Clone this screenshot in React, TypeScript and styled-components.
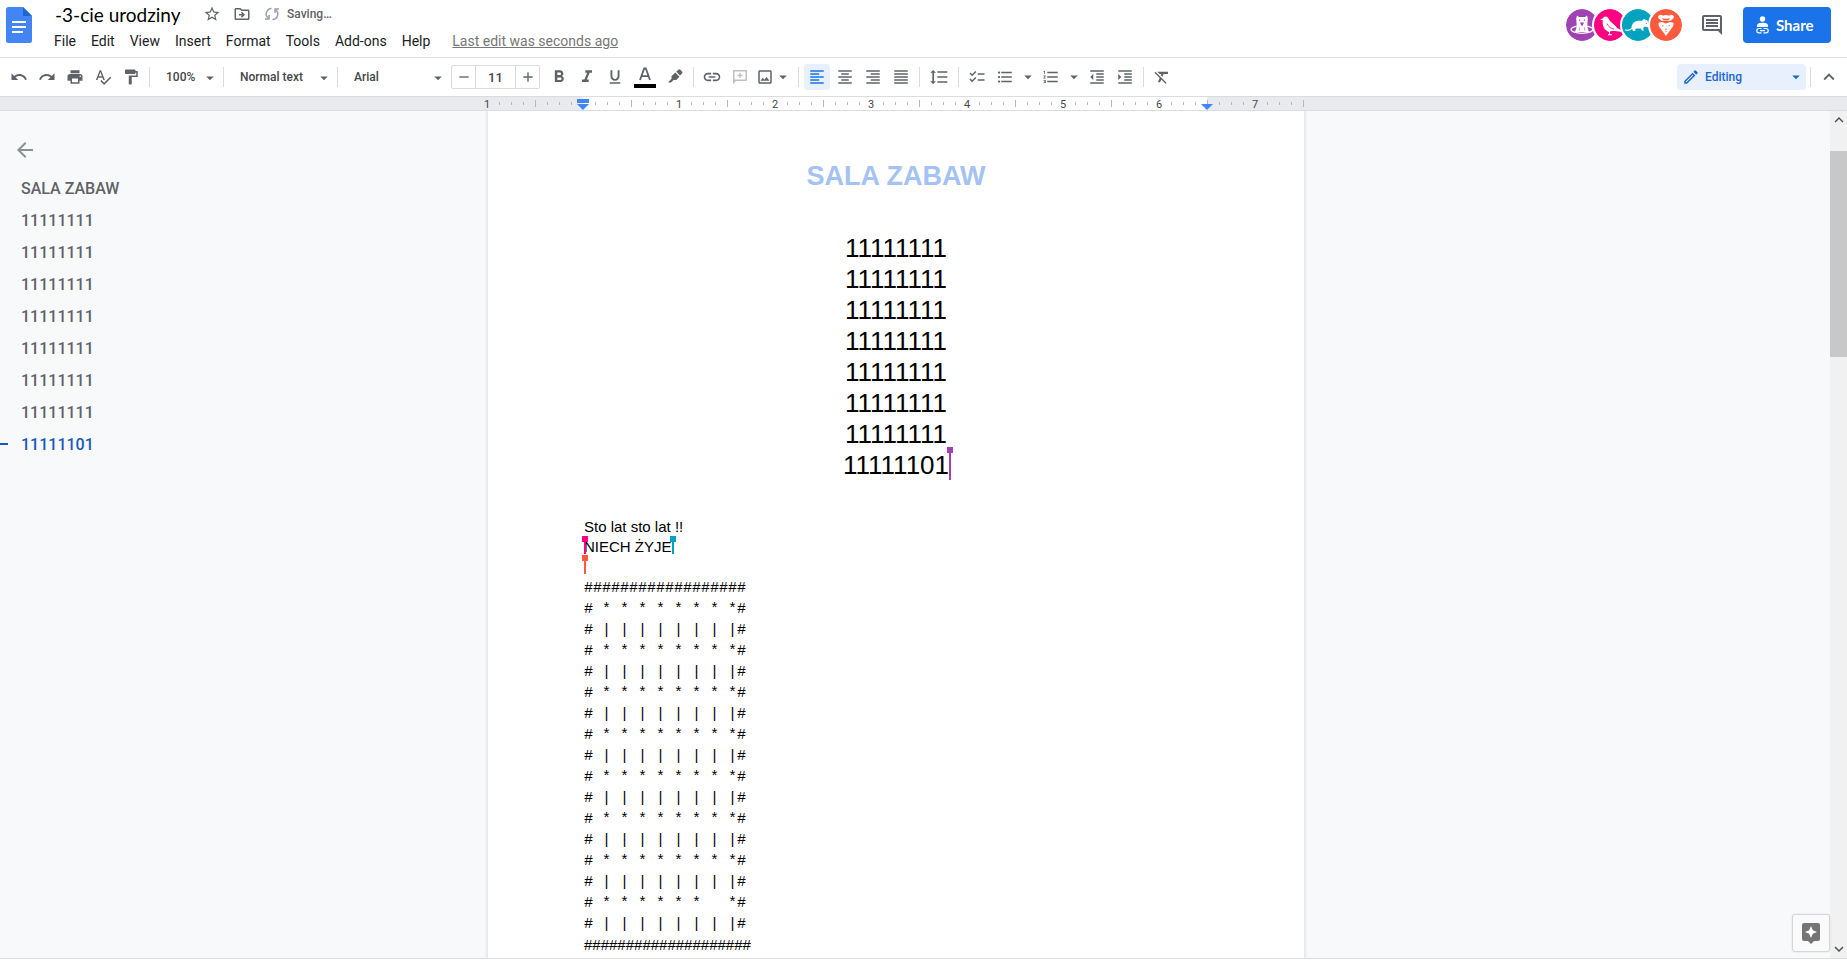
import React from "react";
import styled, { createGlobalStyle } from "styled-components";
import {
  MdStarBorder,
  MdOutlineDriveFileMove,
  MdUndo,
  MdRedo,
  MdPrint,
  MdSpellcheck,
  MdFormatPaint,
  MdAdd,
  MdRemove,
  MdFormatBold,
  MdFormatItalic,
  MdFormatUnderlined,
  MdLink,
  MdOutlineImage,
  MdFormatAlignLeft,
  MdFormatAlignCenter,
  MdFormatAlignRight,
  MdFormatAlignJustify,
  MdFormatLineSpacing,
  MdChecklist,
  MdFormatListBulleted,
  MdFormatListNumbered,
  MdFormatIndentDecrease,
  MdFormatIndentIncrease,
  MdFormatClear,
  MdKeyboardArrowUp,
  MdKeyboardArrowDown,
  MdArrowDropDown,
  MdArrowBack,
  MdOutlineEdit,
} from "react-icons/md";

const GlobalStyle = createGlobalStyle`
  *, *::before, *::after { box-sizing: border-box; }
  body { margin: 0; background: #fff; font-family: Roboto, "Liberation Sans", sans-serif; color: #202124; }
  button, input, select { font: inherit; color: inherit; }
  button { border: 0; padding: 0; background: none; cursor: pointer; }
  h1, h2, p, ul { margin: 0; padding: 0; }
  svg { display: block; flex: none; }
`;

const Shell = styled.div`
  display: flex;
  flex-direction: column;
  height: 100vh;
  overflow: hidden;
  padding-bottom: 4px;
`;

/* ---------- header ---------- */

const Header = styled.header`
  display: flex;
  flex: none;
  height: 58px;
  border-bottom: 1px solid #dadce0;
  padding: 7px 16px 0 6px;
`;

const HomeLink = styled.a`
  display: block;
  height: 36px;
`;

const TitleBlock = styled.div`
  flex: 1;
  margin-left: 15px;
  min-width: 0;
`;

const TitleRow = styled.div`
  display: flex;
  align-items: center;
  height: 14px;
  padding-left: 8px;
  color: #5f6368;
`;

const TitleInput = styled.input`
  width: 147px;
  height: 24px;
  border: 0;
  padding: 0;
  background: none;
  font-family: Lato, Roboto, sans-serif;
  font-size: 19px;
  color: #000;
  outline: none;
`;

const TitleButton = styled.button`
  display: flex;
  align-items: center;
  justify-content: center;
  width: 20px;
  height: 20px;
  margin-right: 10px;
`;

const SaveState = styled.span`
  display: flex;
  align-items: center;
  gap: 7px;
  margin-left: 2px;
  font-size: 12px;
  font-weight: 500;
`;

const MenuBar = styled.nav`
  display: flex;
  align-items: center;
  gap: 1px;
  height: 22px;
  margin-top: 9px;
`;

const MenuButton = styled.button`
  padding: 0 7px;
  height: 22px;
  font-size: 14px;
  line-height: 22px;
`;

const LastEdit = styled.a`
  margin-left: 14px;
  font-size: 14px;
  line-height: 20px;
  color: #777;
  text-decoration: underline;
`;

const HeaderRight = styled.div`
  display: flex;
  align-items: center;
  height: 36px;
`;

const Avatars = styled.div`
  display: flex;
  margin-right: 18px;
`;

const Avatar = styled.span<{ $color: string }>`
  display: block;
  width: 36px;
  height: 36px;
  border: 2px solid #fff;
  border-radius: 50%;
  background: ${(p) => p.$color};
  background-clip: padding-box;
  & + & {
    margin-left: -8px;
  }
`;

const CommentButton = styled.button`
  margin-right: 21px;
  color: #5f6368;
`;

const ShareButton = styled.button`
  display: flex;
  align-items: center;
  gap: 7px;
  width: 88px;
  height: 36px;
  padding-left: 13px;
  border-radius: 4px;
  background: #1a73e8;
  color: #fff;
  font-family: Lato, Roboto, sans-serif;
  font-size: 15px;
  font-weight: 700;
`;

/* ---------- toolbar ---------- */

const Toolbar = styled.div`
  display: flex;
  flex: none;
  align-items: center;
  height: 39px;
  border-bottom: 1px solid #dadce0;
  padding: 0 4px 0 5px;
  color: #5f6368;
`;

const ToolButton = styled.button<{ $active?: boolean; $width?: number; $faint?: boolean }>`
  display: flex;
  flex: none;
  align-items: center;
  justify-content: center;
  width: ${(p) => p.$width ?? 26}px;
  height: 26px;
  margin: 0 1px;
  border-radius: 3px;
  opacity: ${(p) => (p.$faint ? 0.4 : 1)};
  background: ${(p) => (p.$active ? "#e8f0fe" : "none")};
  color: ${(p) => (p.$active ? "#1a73e8" : "inherit")};
`;

const Divider = styled.span`
  flex: none;
  width: 1px;
  height: 20px;
  margin: 0 4px;
  background: #dadce0;
`;

const SelectBox = styled.label<{ $width: number }>`
  position: relative;
  display: block;
  flex: none;
  width: ${(p) => p.$width}px;
  height: 26px;
  & > svg {
    position: absolute;
    right: 0;
    top: 5px;
    pointer-events: none;
  }
`;

const Select = styled.select`
  appearance: none;
  width: 100%;
  height: 26px;
  border: 0;
  padding: 0 0 0 12px;
  background: none;
  font-size: 12px;
  font-weight: 500;
  color: #444746;
  outline: none;
`;

const SizeBox = styled.div`
  display: flex;
  flex: none;
  height: 24px;
  margin: 0 5px 0 4px;
  border: 1px solid #dadce0;
  border-radius: 2px;
`;

const SizeButton = styled.button`
  display: flex;
  align-items: center;
  justify-content: center;
  width: 23px;
`;

const SizeInput = styled.input`
  width: 41px;
  border: 0;
  border-left: 1px solid #dadce0;
  border-right: 1px solid #dadce0;
  padding: 0;
  text-align: center;
  font-size: 13px;
  font-weight: 500;
  color: #444746;
  outline: none;
`;

const Spacer = styled.span`
  flex: 1;
`;

const ModeBox = styled.label`
  position: relative;
  display: block;
  flex: none;
  width: 129px;
  height: 26px;
  border-radius: 4px;
  background: #e8f0fe;
  color: #1967d2;
  & > svg {
    position: absolute;
    top: 4px;
    pointer-events: none;
  }
  & > svg:first-child {
    left: 5px;
  }
  & > svg:last-child {
    right: 1px;
  }
`;

const ModeSelect = styled(Select)`
  padding-left: 28px;
  color: #1967d2;
`;

/* ---------- ruler ---------- */

const Ruler = styled.div`
  display: grid;
  flex: none;
  grid-template-columns: minmax(0, 1fr) 816px minmax(0, 1fr) 55px;
  height: 14px;
  border-bottom: 1px solid #dadce0;
  background: #e8eaed;
`;

const RulerScale = styled.div`
  position: relative;
  display: flex;
  grid-column: 2;
  align-items: center;
  height: 13px;
  margin: 0 -5px 0 -7px;
  background: linear-gradient(#fff, #fff) 102px 0 / 624px 13px no-repeat;
`;

const RulerCell = styled.span`
  display: flex;
  flex: none;
  justify-content: center;
  width: 12px;
`;

const RulerNumber = styled(RulerCell)`
  padding-top: 2px;
  font-size: 11px;
  line-height: 13px;
  color: #444746;
`;

const Tick = styled.i<{ $major?: boolean }>`
  width: 1px;
  height: ${(p) => (p.$major ? 7 : 3)}px;
  background: #b4b7bb;
`;

const Indent = styled.svg<{ $left: number }>`
  position: absolute;
  top: 2px;
  left: ${(p) => p.$left}px;
`;

/* ---------- editor ---------- */

const Editor = styled.main`
  position: relative;
  display: grid;
  flex: 1;
  grid-template-columns: minmax(0, 1fr) 816px minmax(0, 1fr) 38px 17px;
  min-height: 0;
  overflow: hidden;
  border-bottom: 1px solid #dadce0;
  background: #f8f9fb;
`;

const Outline = styled.nav`
  padding: 27px 0 0;
  color: #5f6368;
`;

const BackButton = styled.button`
  display: block;
  margin: 0 0 10px 13px;
  opacity: 0.7;
`;

const OutlineList = styled.ul`
  list-style: none;
`;

const OutlineLink = styled.a<{ $current?: boolean }>`
  display: flex;
  align-items: center;
  height: 32px;
  font-size: 16px;
  font-weight: 500;
  text-decoration: none;
  color: ${(p) => (p.$current ? "#185abc" : "#5f6368")};
  &::before {
    content: "";
    width: 8px;
    height: 2px;
    margin-right: 13px;
    background: ${(p) => (p.$current ? "#185abc" : "transparent")};
  }
`;

const Page = styled.article`
  grid-column: 2;
  min-height: 0;
  overflow: hidden;
  padding: 50px 96px 0;
  background: #fff;
  box-shadow: 0 0 3px 1px rgba(60, 64, 67, 0.15);
  font-family: "Liberation Sans", Arial, sans-serif;
  color: #000;
`;

const DocTitle = styled.h1`
  margin-bottom: 41px;
  text-align: center;
  font-size: 27px;
  line-height: 31px;
  font-weight: 700;
  color: #a4c2f4;
`;

const DocHeading = styled.h2`
  height: 31px;
  text-align: center;
  font-size: 26px;
  line-height: 31px;
  font-weight: 400;
`;

const Body = styled.div`
  margin-top: 36px;
`;

const Line = styled.p`
  height: 20px;
  font-size: 15px;
  line-height: 20px;
  white-space: pre;
`;

const Cake = styled.div`
  margin-top: 1px;
`;

const MonoLine = styled.p`
  font-family: "Liberation Mono", monospace;
  font-size: 15px;
  line-height: 21px;
  white-space: pre;
`;

const Caret = styled.span<{ $color: string; $height: number; $rise: number }>`
  position: relative;
  display: inline-block;
  width: 0;
  height: 1px;
  vertical-align: top;
  &::before,
  &::after {
    content: "";
    position: absolute;
    top: ${(p) => -p.$rise}px;
    background: ${(p) => p.$color};
  }
  &::before {
    left: 0;
    width: 2px;
    height: ${(p) => p.$height}px;
  }
  &::after {
    left: -2px;
    width: 6px;
    height: 6px;
  }
`;

const Scrollbar = styled.div`
  display: flex;
  grid-column: 5;
  flex-direction: column;
  align-items: center;
  background: #f1f1f1;
  color: #505050;
`;

const ScrollThumb = styled.span`
  width: 17px;
  height: 206px;
  margin-top: 22px;
  margin-bottom: auto;
  background: #c8c8c8;
`;

const ExploreButton = styled.button`
  position: absolute;
  right: 17px;
  bottom: 6px;
  display: flex;
  align-items: center;
  justify-content: center;
  width: 38px;
  height: 38px;
  border: 1px solid #d4d6d9;
  border-radius: 3px;
  background: #fafafa;
  box-shadow: 0 0 2px rgba(0, 0, 0, 0.12);
`;

/* ---------- drawings ---------- */

const DocsLogo = () => (
  <svg width="26" height="36" viewBox="0 0 26 36" aria-hidden="true">
    <path d="M2.500 0H17l9 9v24.500a2.500 2.500 0 0 1-2.500 2.500h-21A2.500 2.500 0 0 1 0 33.500v-31A2.500 2.500 0 0 1 2.500 0z" fill="#4285f4" />
    <path d="M17 0l9 9h-9z" fill="#1967d2" />
    <path d="M6 14h14v2H6zM6 19h14v2H6zM6 24h11v2H6z" fill="#fff" />
  </svg>
);

const SyncIcon = () => (
  <svg width="16" height="16" viewBox="0 0 16 16" fill="none" stroke="#9aa0a6" strokeWidth="1.500" aria-hidden="true">
    <path d="M7.500 2.500A5.500 5.500 0 0 0 4 12M8.500 13.500A5.500 5.500 0 0 0 12 4" />
    <path d="M1 13h4V9M15 3h-4v4" />
  </svg>
);

const BearIcon = () => (
  <svg width="32" height="32" viewBox="0 0 32 32" aria-hidden="true">
    <ellipse cx="16" cy="20.500" rx="11" ry="3.800" fill="none" stroke="#fff" strokeWidth="1.200" />
    <path d="M11 6.500l2 1.500h6l2-1.500.8 3-.6 8 1.800 5.500H9l1.800-5.500-.6-8z" fill="#fff" />
    <path d="M14 13.500h4l-1.200 3h-1.600zM13 10.500h1.200v1.200H13zM17.800 10.500H19v1.200h-1.200z" fill="#a142b4" />
    <path d="M13.300 18.500v3M18.700 18.500v3" stroke="#a142b4" strokeWidth=".6" />
  </svg>
);

const BirdIcon = () => (
  <svg width="32" height="32" viewBox="0 0 32 32" aria-hidden="true">
    <path d="M6 10.500l3-1.300C9.800 7.500 12 7 13.500 8.200c1.500 1.200 1.500 3 3.500 4.800 2.500 2.300 4.500 3.500 6 6l4 2v1.800l-6-.8h-3.500l-1.500.8v2.500h2v1h-4v-1h1v-2.300C10.500 21.500 8 17.500 8.800 11.300z" fill="#fff" />
    <path d="M13 14.500c1.500 3.500 4 5 7 5.500" stroke="#ff0080" fill="none" strokeWidth=".8" />
  </svg>
);

const RatIcon = () => (
  <svg width="32" height="32" viewBox="0 0 32 32" aria-hidden="true">
    <path d="M3.500 21c4.500 1.500 6-1.500 8.500-3" fill="none" stroke="#fff" strokeWidth="1.200" strokeLinecap="round" />
    <path d="M9.500 18.500c.3-4.500 3.500-7 8-6.800 1.500 0 2.700 0 3.300-.5.300-1.200 2.700-1.200 2.900.2 1-.7 2.300 0 1.900 1.200 1 1.200 1.600 3.200 1.600 5.400-1.600.6-3.200.3-4.600-.4l-1.500 1.400.9 2.500h-2l-1.300-2h-4.200l-1.500 1 .6 1.500h-2.500l-.7-1.500z" fill="#fff" />
    <circle cx="24.300" cy="14.500" r=".6" fill="#00a3bf" />
  </svg>
);

const FerretIcon = () => (
  <svg width="32" height="32" viewBox="0 0 32 32" aria-hidden="true">
    <path d="M9 6.200c1.500-1 3-.5 3.700.5 2.200-.9 4.400-.9 6.600 0 .7-1 2.200-1.500 3.700-.5 1.500 1.200 1 3.300-.7 4l-1.800 1.600h-9L9.700 10.200C8 9.500 7.500 7.400 9 6.200z" fill="#fff" />
    <path d="M8.500 13.800l3.500-.8 4 1.500 4-1.500 3.500.8c.3 2.500-.8 4.500-2.200 6L16 27l-5.300-7.200c-1.400-1.500-2.500-3.500-2.200-6z" fill="#fff" />
    <path d="M12 8.800l2.200 1h3.600l2.200-1-1.500 2.400h-5zM12 16l2 1-1.500.6zM20 16l-2 1 1.500.6zM14.800 19.800h2.400L16 21.200zM14.500 23.200l1.500-1.200 1.500 1.200-1.500-.4z" fill="#ff5a3c" />
  </svg>
);

const CommentIcon = () => (
  <svg width="20" height="20" viewBox="0 0 20 20" fill="currentColor" aria-hidden="true">
    <path fillRule="evenodd" d="M2 0h16a2 2 0 0 1 2 2v18l-4-4H2a2 2 0 0 1-2-2V2a2 2 0 0 1 2-2zm0 2v12h16V2z" />
    <path d="M4 4h12v2H4zM4 7h12v2H4zM4 10h12v2H4z" />
  </svg>
);

const SharePersonIcon = () => (
  <svg width="13" height="18" viewBox="0 0 13 18" aria-hidden="true">
    <circle cx="6.500" cy="3" r="2.700" fill="#fff" />
    <path d="M1 11V9.500C1 7.500 4 6.800 6.500 6.800S12 7.500 12 9.500V11z" fill="#fff" />
    <path d="M5.500 12.500H3a2.200 2.200 0 0 0 0 4.400h2.500M7.500 12.500H10a2.200 2.200 0 0 1 0 4.400H7.500M4 14.700h5" fill="none" stroke="#fff" strokeWidth="1.200" />
  </svg>
);

const TextColorIcon = () => (
  <svg width="22" height="22" viewBox="0 0 22 22" aria-hidden="true">
    <path d="M6 14L10.200 2.500h1.600L16 14M7.500 10.200h7" fill="none" stroke="#5f6368" strokeWidth="1.800" />
    <path d="M0 18h22v4H0z" fill="#000" />
  </svg>
);

const HighlightIcon = () => (
  <svg width="16" height="16" viewBox="0 0 16 16" fill="currentColor" aria-hidden="true">
    <path d="M9.300 2.800l2-2a1.500 1.500 0 0 1 2 0l1.700 1.700a1.500 1.500 0 0 1 0 2l-2 2z" />
    <path d="M8.300 3.500l4.200 4.200-3.300 3.200H6.500L4 13.500H1l3.500-3.800V7.200z" />
  </svg>
);

const AddCommentIcon = () => (
  <svg width="14" height="14" viewBox="0 0 14 14" fill="currentColor" aria-hidden="true">
    <path fillRule="evenodd" d="M1 0h12a1 1 0 0 1 1 1v9a1 1 0 0 1-1 1H3l-3 3V1a1 1 0 0 1 1-1zm.5 1.500v8h11v-8z" />
    <path d="M6.300 3h1.400v1.800h1.800v1.400H7.700V8H6.300V6.200H4.500V4.800h1.800z" />
  </svg>
);

const ExploreIcon = () => (
  <svg width="18" height="21" viewBox="0 0 18 21" aria-hidden="true">
    <path d="M2 0h14a2 2 0 0 1 2 2v14a2 2 0 0 1-2 2h-4l-3 3-3-3H2a2 2 0 0 1-2-2V2a2 2 0 0 1 2-2z" fill="#757575" />
    <path d="M9 3l1.800 4.200L15 9l-4.200 1.800L9 15l-1.800-4.200L3 9l4.200-1.800z" fill="#fff" />
  </svg>
);

/* ---------- data ---------- */

const MENUS = ["File", "Edit", "View", "Insert", "Format", "Tools", "Add-ons", "Help"];
const HEADINGS = [...Array(7).fill("11111111"), "11111101"];
const STARS = "# * * * * * * * *#";
const PIPES = "# | | | | | | | |#";
const CAKE = [
  "#".repeat(18),
  ...Array(7).fill([STARS, PIPES]).flat(),
  "# * * * * * *   *#",
  PIPES,
];

const ICON = 18;

function RulerMark({ index }: { index: number }) {
  if (index === 8) return <RulerCell />;
  if (index % 8 === 0) return <RulerNumber>{Math.abs(index / 8 - 1)}</RulerNumber>;
  return (
    <RulerCell>
      <Tick $major={index % 8 === 4} />
    </RulerCell>
  );
}

function ToolSelect({ label, value, width }: { label: string; value: string; width: number }) {
  return (
    <SelectBox $width={width}>
      <Select aria-label={label} defaultValue={value}>
        <option>{value}</option>
      </Select>
      <MdArrowDropDown size={18} />
    </SelectBox>
  );
}

export default function App() {
  return (
    <Shell>
      <GlobalStyle />
      <Header>
        <HomeLink href="#home" aria-label="Docs home">
          <DocsLogo />
        </HomeLink>
        <TitleBlock>
          <TitleRow>
            <TitleInput aria-label="Document name" defaultValue="-3-cie urodziny" />
            <TitleButton aria-label="Star"><MdStarBorder size={18} /></TitleButton>
            <TitleButton aria-label="Move"><MdOutlineDriveFileMove size={18} /></TitleButton>
            <SaveState>
              <SyncIcon />
              Saving…
            </SaveState>
          </TitleRow>
          <MenuBar aria-label="Menu">
            {MENUS.map((name) => (
              <MenuButton key={name}>{name}</MenuButton>
            ))}
            <LastEdit href="#history">Last edit was seconds ago</LastEdit>
          </MenuBar>
        </TitleBlock>
        <HeaderRight>
          <Avatars>
            <Avatar $color="#a142b4"><BearIcon /></Avatar>
            <Avatar $color="#ff0080"><BirdIcon /></Avatar>
            <Avatar $color="#00a3bf"><RatIcon /></Avatar>
            <Avatar $color="#ff5a3c"><FerretIcon /></Avatar>
          </Avatars>
          <CommentButton aria-label="Open comment history"><CommentIcon /></CommentButton>
          <ShareButton>
            <SharePersonIcon />
            Share
          </ShareButton>
        </HeaderRight>
      </Header>

      <Toolbar role="toolbar">
        <ToolButton aria-label="Undo"><MdUndo size={ICON} /></ToolButton>
        <ToolButton aria-label="Redo"><MdRedo size={ICON} /></ToolButton>
        <ToolButton aria-label="Print"><MdPrint size={ICON} /></ToolButton>
        <ToolButton aria-label="Spelling"><MdSpellcheck size={ICON} /></ToolButton>
        <ToolButton aria-label="Paint format"><MdFormatPaint size={ICON} /></ToolButton>
        <Divider />
        <ToolSelect label="Zoom" value="100%" width={65} />
        <Divider />
        <ToolSelect label="Styles" value="Normal text" width={105} />
        <Divider />
        <ToolSelect label="Font" value="Arial" width={105} />
        <SizeBox>
          <SizeButton aria-label="Decrease font size"><MdRemove size={16} /></SizeButton>
          <SizeInput aria-label="Font size" defaultValue="11" />
          <SizeButton aria-label="Increase font size"><MdAdd size={16} /></SizeButton>
        </SizeBox>
        <ToolButton aria-label="Bold"><MdFormatBold size={20} /></ToolButton>
        <ToolButton aria-label="Italic"><MdFormatItalic size={20} /></ToolButton>
        <ToolButton aria-label="Underline"><MdFormatUnderlined size={ICON} /></ToolButton>
        <ToolButton aria-label="Text color" $width={30}><TextColorIcon /></ToolButton>
        <ToolButton aria-label="Highlight color"><HighlightIcon /></ToolButton>
        <Divider />
        <ToolButton aria-label="Insert link"><MdLink size={20} /></ToolButton>
        <ToolButton aria-label="Add comment" $faint><AddCommentIcon /></ToolButton>
        <ToolButton aria-label="Insert image" $width={38}>
          <MdOutlineImage size={ICON} />
          <MdArrowDropDown size={18} />
        </ToolButton>
        <Divider />
        <ToolButton aria-label="Align left" $active><MdFormatAlignLeft size={ICON} /></ToolButton>
        <ToolButton aria-label="Align center"><MdFormatAlignCenter size={ICON} /></ToolButton>
        <ToolButton aria-label="Align right"><MdFormatAlignRight size={ICON} /></ToolButton>
        <ToolButton aria-label="Justify"><MdFormatAlignJustify size={ICON} /></ToolButton>
        <Divider />
        <ToolButton aria-label="Line spacing" $width={28}><MdFormatLineSpacing size={20} /></ToolButton>
        <Divider />
        <ToolButton aria-label="Checklist"><MdChecklist size={ICON} /></ToolButton>
        <ToolButton aria-label="Bulleted list"><MdFormatListBulleted size={ICON} /></ToolButton>
        <ToolButton aria-label="Bulleted list options" $width={16}><MdArrowDropDown size={18} /></ToolButton>
        <ToolButton aria-label="Numbered list"><MdFormatListNumbered size={ICON} /></ToolButton>
        <ToolButton aria-label="Numbered list options" $width={16}><MdArrowDropDown size={18} /></ToolButton>
        <ToolButton aria-label="Decrease indent"><MdFormatIndentDecrease size={ICON} /></ToolButton>
        <ToolButton aria-label="Increase indent"><MdFormatIndentIncrease size={ICON} /></ToolButton>
        <Divider />
        <ToolButton aria-label="Clear formatting"><MdFormatClear size={ICON} /></ToolButton>
        <Spacer />
        <ModeBox>
          <MdOutlineEdit size={18} />
          <ModeSelect aria-label="Mode" defaultValue="Editing">
            <option>Editing</option>
          </ModeSelect>
          <MdArrowDropDown size={18} />
        </ModeBox>
        <Divider />
        <ToolButton aria-label="Hide the menus"><MdKeyboardArrowUp size={22} /></ToolButton>
      </Toolbar>

      <Ruler>
        <RulerScale>
          {Array.from({ length: 69 }, (_, i) => (
            <RulerMark key={i} index={i} />
          ))}
          <Indent $left={96} width="12" height="11" viewBox="0 0 12 11" fill="#4285f4">
            <path d="M0 0h12v4H0zM0 5h12L6 11z" />
          </Indent>
          <Indent $left={720} width="12" height="11" viewBox="0 0 12 11" fill="#4285f4">
            <path d="M0 5h12L6 11z" />
          </Indent>
        </RulerScale>
      </Ruler>

      <Editor>
        <Outline aria-label="Document outline">
          <BackButton aria-label="Close outline"><MdArrowBack size={24} /></BackButton>
          <OutlineList>
            <li><OutlineLink href="#h0">SALA ZABAW</OutlineLink></li>
            {HEADINGS.map((text, i) => (
              <li key={i}>
                <OutlineLink href={`#h${i + 1}`} $current={i === HEADINGS.length - 1}>{text}</OutlineLink>
              </li>
            ))}
          </OutlineList>
        </Outline>

        <Page>
          <DocTitle>SALA ZABAW</DocTitle>
          {HEADINGS.map((text, i) => (
            <DocHeading key={i}>
              {text}
              {i === HEADINGS.length - 1 && <Caret $color="#a142b4" $height={33} $rise={3} />}
            </DocHeading>
          ))}
          <Body>
            <Line>Sto lat sto lat !!</Line>
            <Line>
              <Caret $color="#ff0080" $height={18} $rise={1} />
              NIECH ŻYJE
              <Caret $color="#00a3bf" $height={18} $rise={1} />
            </Line>
            <Line><Caret $color="#ff5a3c" $height={19} $rise={2} /></Line>
            <Cake>
              {CAKE.map((row, i) => (
                <MonoLine key={i}>{row}</MonoLine>
              ))}
            </Cake>
            <Line>{"#".repeat(20)}</Line>
          </Body>
        </Page>

        <Scrollbar aria-hidden="true">
          <MdKeyboardArrowUp size={18} />
          <ScrollThumb />
          <MdKeyboardArrowDown size={18} />
        </Scrollbar>
        <ExploreButton aria-label="Explore"><ExploreIcon /></ExploreButton>
      </Editor>
    </Shell>
  );
}
